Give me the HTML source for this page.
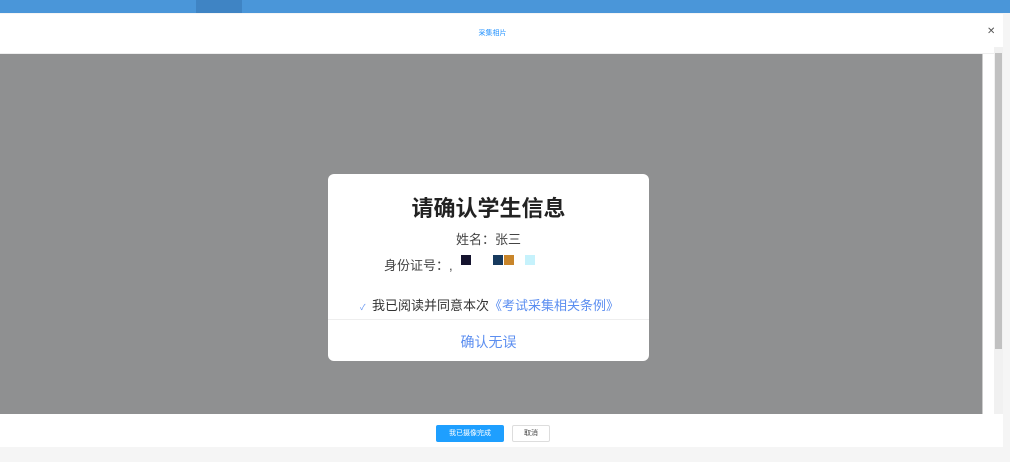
<!DOCTYPE html>
<html><head><meta charset="utf-8"><style>
*{margin:0;padding:0;box-sizing:border-box}
body{width:1010px;height:462px;overflow:hidden;background:#f5f5f5;font-family:"Liberation Sans","Noto Sans CJK SC",sans-serif;position:relative}
.top{position:absolute;left:0;top:0;width:1010px;height:13px;background:#4a96d9}
.tab{position:absolute;left:196px;top:0;width:46px;height:13px;background:#3f84c4}
.modal{position:absolute;left:0;top:14px;width:1003px;height:433px;background:#fff}
.title{position:absolute;left:0;width:985px;top:14px;text-align:center;font-size:7px;color:#1e90ff}
.close{position:absolute;left:987px;top:12px;font-size:10px;color:#555}
.hline{position:absolute;left:0;top:39px;width:1003px;height:1px;background:#eee}
.gray{position:absolute;left:0;top:40px;width:983px;height:360px;background:#8f9091;border-right:1px solid #ccc}
.track{position:absolute;left:994px;top:33px;width:9px;height:367px;background:#f1f1f1}
.thumb{position:absolute;left:995px;top:39px;width:7px;height:296px;background:#c1c1c1}
.dlg{position:absolute;left:328px;top:174px;width:321px;height:187px;background:#fff;border-radius:6px}
.h{position:absolute;top:17px;width:100%;text-align:center;font-size:22px;font-weight:bold;color:#222}
.n{position:absolute;top:55px;width:100%;text-align:center;font-size:13px;color:#444}
.id{position:absolute;top:81px;left:56px;font-size:13px;color:#444}
.sq{position:absolute;width:10px;height:10px}
.chk{position:absolute;top:121px;left:32px;font-size:13px;color:#333;white-space:nowrap}
.chk b{display:inline-block;width:8px;height:8px;margin-right:4px;vertical-align:0;color:#5b8ef0;font-size:8px;line-height:8px;font-weight:normal}
.div{position:absolute;top:145px;left:0;width:100%;height:1px;background:#eee}
.ok{position:absolute;top:158px;width:100%;text-align:center;font-size:14px;color:#5b8ef0}
.b1{position:absolute;left:436px;top:425px;width:68px;height:17px;background:#1e9fff;color:#fff;font-size:7px;text-align:center;line-height:17px;border-radius:2px}
.b2{position:absolute;left:512px;top:425px;width:38px;height:17px;background:#fff;border:1px solid #ddd;color:#444;font-size:7px;text-align:center;line-height:15px;border-radius:2px}
</style></head><body>
<div class="top"><div class="tab"></div></div>
<div class="modal">
<div class="title">采集相片</div>
<div class="close">✕</div>
<div class="hline"></div>
<div class="gray"></div>
<div class="track"></div><div class="thumb"></div>
</div>
<div class="dlg">
<div class="h">请确认学生信息</div>
<div class="n">姓名：张三</div>
<div class="id">身份证号：,</div>
<div class="sq" style="left:133px;top:81px;background:#14132e"></div>
<div class="sq" style="left:165px;top:81px;background:#173a5e"></div>
<div class="sq" style="left:176px;top:81px;background:#c8852a"></div>
<div class="sq" style="left:197px;top:81px;background:#c6f2fc"></div>
<div class="chk"><b>✓</b>我已阅读并同意本次<span style="color:#5b8ef0">《考试采集相关条例》</span></div>
<div class="div"></div>
<div class="ok">确认无误</div>
</div>
<div class="b1">我已摄像完成</div>
<div class="b2">取消</div>
</body></html>
